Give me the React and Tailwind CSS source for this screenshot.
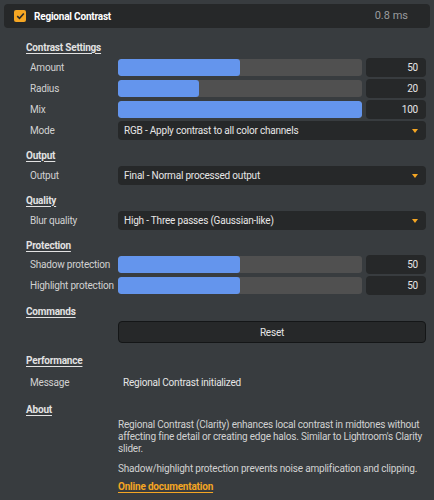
import React from 'react';

const font = { fontFamily: 'Roboto, "Noto Sans", sans-serif' };

function SectionTitle({ children, className = '' }) {
  return (
    <div className={`h-3 pl-[26px] flex items-center text-[10px] font-bold text-[#e2e2e2] underline underline-offset-2 ${className}`}>
      {children}
    </div>
  );
}

function Row({ label, children, className = 'h-[19px]' }) {
  return (
    <div className={`flex items-center pr-2 ${className}`}>
      <div className="w-[118px] shrink-0 pl-[30px] text-[10px] text-[#d2d2d2] whitespace-nowrap">{label}</div>
      <div className="flex-1 flex items-center h-full gap-1">{children}</div>
    </div>
  );
}

function Slider({ label, value, max }) {
  const pct = (value / max) * 100;
  return (
    <Row label={label}>
      <div className="flex-1 h-[17px] bg-[#505050] rounded-[3px] overflow-hidden">
        <div className="h-full bg-[#6495ed] rounded-[3px]" style={{ width: `${pct}%` }}></div>
      </div>
      <div className="w-[60px] h-full bg-[#262829] rounded-[4px] flex items-center justify-end pr-2 text-[10px] text-[#e6e6e6]">
        {value}
      </div>
    </Row>
  );
}

function Select({ label, text }) {
  return (
    <Row label={label}>
      <div className="flex-1 h-full bg-[#262829] rounded-[4px] flex items-center justify-between pl-[6px] pr-[8px] text-[10px] text-[#e6e6e6]">
        <span>{text}</span>
        <svg width="6" height="4" viewBox="0 0 6 4">
          <polygon points="0,0 6,0 3,4" fill="#f5a623" />
        </svg>
      </div>
    </Row>
  );
}

export default function App() {
  return (
    <div className="w-[434px] h-[500px] bg-[#383c3f] overflow-hidden tracking-[-0.2px]" style={font}>
      {/* 헤더 */}
      <div className="pt-1 px-1">
        <div className="h-6 bg-[#262829] rounded-[4px] flex items-center pl-[10px] pr-[22px]">
          <div className="w-3 h-3 rounded-[2px] bg-[#f5a623] flex items-center justify-center">
            <svg width="9" height="8" viewBox="0 0 9 8">
              <path d="M1.2 4.2 L3.5 6.3 L7.8 1.5" stroke="#2a2a2a" strokeWidth="1.6" fill="none" />
            </svg>
          </div>
          <div className="ml-[8px] text-[10px] font-bold text-white">Regional Contrast</div>
          <div className="ml-auto text-[11px] text-[#9a9c9e] tracking-normal">0.8 ms</div>
        </div>
      </div>

      <SectionTitle className="mt-[13px]">Contrast Settings</SectionTitle>
      <div className="mt-[5px] flex flex-col gap-[2px]">
        <Slider label="Amount" value={50} max={100} />
        <Slider label="Radius" value={20} max={60} />
        <Slider label="Mix" value={100} max={100} />
        <Select label="Mode" text="RGB - Apply contrast to all color channels" />
      </div>

      <SectionTitle className="mt-[9px]">Output</SectionTitle>
      <div className="mt-[5px]">
        <Select label="Output" text="Final - Normal processed output" />
      </div>

      <SectionTitle className="mt-[9px]">Quality</SectionTitle>
      <div className="mt-[5px]">
        <Select label="Blur quality" text="High - Three passes (Gaussian-like)" />
      </div>

      <SectionTitle className="mt-[9px]">Protection</SectionTitle>
      <div className="mt-[4px] flex flex-col gap-[2px]">
        <Slider label="Shadow protection" value={50} max={100} />
        <Slider label="Highlight protection" value={50} max={100} />
      </div>

      <SectionTitle className="mt-[10px]">Commands</SectionTitle>
      <div className="mt-[4px]">
        <Row label="" className="h-[22px]">
          <button className="flex-1 h-full bg-[#262829] border-[1.5px] border-[#141617] rounded-[4px] text-[10px] text-[#e6e6e6]">
            Reset
          </button>
        </Row>
      </div>

      <SectionTitle className="mt-[11px]">Performance</SectionTitle>
      <div className="mt-[5px]">
        <Row label="Message" className="h-[22px]">
          <span className="pl-[5px] text-[10px] text-[#e6e6e6]">Regional Contrast initialized</span>
        </Row>
      </div>

      <SectionTitle className="mt-[10px]">About</SectionTitle>
      <div className="mt-[4px] pl-[118px] pr-1 text-[10px] leading-[12px] text-[#d2d2d2]">
        <p>
          Regional Contrast (Clarity) enhances local contrast in midtones without affecting fine detail or creating edge halos. Similar to Lightroom's Clarity slider.
        </p>
        <p className="mt-[8px]">Shadow/highlight protection prevents noise amplification and clipping.</p>
        <a className="block mt-[6px] font-bold text-[#f5a623] underline underline-offset-2">Online documentation</a>
      </div>
    </div>
  );
}
